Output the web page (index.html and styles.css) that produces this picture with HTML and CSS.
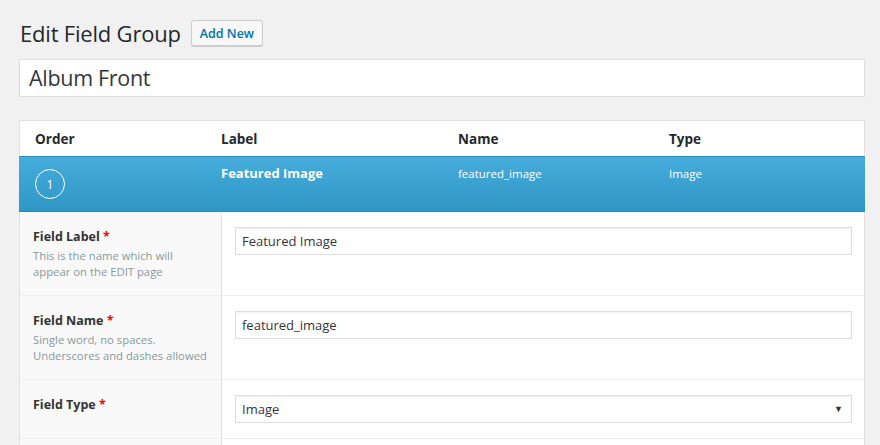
FILE: index.html
```html
<!DOCTYPE html>
<html>
<head>
<meta charset="utf-8">
<link rel="stylesheet" href="styles.css">
</head>
<body>
<div class="wrap">
  <div class="page-head">
    <h1 class="page-title">Edit Field Group</h1>
    <a class="btn-add">Add New</a>
  </div>
  <div class="title-box">Album Front</div>
  <div class="panel">
    <div class="thead">
      <div class="c-order">Order</div>
      <div class="c-label">Label</div>
      <div class="c-name">Name</div>
      <div class="c-type">Type</div>
    </div>
    <div class="active-row">
      <div class="c-order"><span class="num">1</span></div>
      <div class="c-label strong">Featured Image</div>
      <div class="c-name">featured_image</div>
      <div class="c-type">Image</div>
    </div>
    <div class="frow r1">
      <div class="flabel">
        <div class="lab">Field Label <span class="req">*</span></div>
        <div class="desc">This is the name which will<br>appear on the EDIT page</div>
      </div>
      <div class="finput"><div class="inp">Featured Image</div></div>
    </div>
    <div class="frow r2">
      <div class="flabel">
        <div class="lab">Field Name <span class="req">*</span></div>
        <div class="desc">Single word, no spaces.<br>Underscores and dashes allowed</div>
      </div>
      <div class="finput"><div class="inp">featured_image</div></div>
    </div>
    <div class="frow r3">
      <div class="flabel">
        <div class="lab">Field Type <span class="req">*</span></div>
      </div>
      <div class="finput"><div class="inp sel"><span>Image</span><span class="arrow">&#9660;</span></div></div>
    </div>
    <div class="frow r4">
      <div class="flabel"></div>
      <div class="finput"></div>
    </div>
  </div>
</div>
</body>
</html>
```
FILE: styles.css
```css
* { box-sizing: border-box; }
html, body { margin: 0; padding: 0; }
body {
  background: #f1f1f1;
  font-family: "Open Sans", "Noto Sans", sans-serif;
  color: #23282d;
  width: 880px;
  height: 445px;
  overflow: hidden;
}
.wrap { padding: 17px 15px 0 19px; }
.page-head { display: flex; align-items: center; height: 31px; }
.page-title {
  margin: 0 0 0 1px;
  font-size: 22px;
  font-weight: 400;
  color: #23282d;
  letter-spacing: -0.2px;
}
.btn-add {
  margin-left: 10px;
  margin-top: 1px;
  height: 26px;
  padding: 0 8px;
  display: flex;
  align-items: center;
  font-size: 12.5px;
  font-weight: 600;
  color: #0073aa;
  background: #f7f7f7;
  border: 1px solid #ccc;
  border-radius: 3px;
  box-shadow: 0 1px 0 #ccc;
}
.title-box {
  margin-top: 11px;
  height: 38px;
  background: #fff;
  border: 1px solid #ddd;
  padding: 0 9px;
  font-size: 21.5px;
  line-height: 36px;
  color: #32373c;
  letter-spacing: -0.3px;
}
.panel {
  margin-top: 23px;
  background: #fff;
  border: 1px solid #e1e1e1;
}
.thead, .active-row { display: flex; }
.c-order { width: 201px; padding-left: 15px; }
.c-label { width: 237px; }
.c-name { width: 211px; }
.c-type { flex: 1; }
.thead {
  height: 35px;
  align-items: center;
  font-size: 13.5px;
  font-weight: 700;
  color: #23282d;
  padding-top: 1px;
}
.active-row {
  height: 56px;
  background: linear-gradient(#46acdc, #2e96c5);
  border-top: 1px solid #2a8fbf;
  border-bottom: 1px solid #2a8fbf;
  color: #fff;
  font-size: 11.5px;
  margin: 0 -1px;
}
.active-row > div { padding-top: 8px; }
.active-row .c-order { width: 202px; padding-left: 16px; padding-top: 12px; }
.active-row .strong { font-size: 13px; font-weight: 700; padding-top: 7px; }
.active-row .c-name { padding-top: 9px; }
.active-row .c-type { padding-top: 9px; }
.num {
  display: flex;
  width: 30px;
  height: 30px;
  border: 1px solid #fff;
  border-radius: 50%;
  align-items: center;
  justify-content: center;
  font-size: 12px;
}
.frow { display: flex; border-top: 1px solid #eee; }
.frow.r1 { border-top: none; height: 83px; }
.frow.r2 { height: 84px; }
.frow.r3 { height: 59px; }
.frow.r4 { height: 20px; }
.flabel {
  width: 202px;
  background: #f9f9f9;
  border-right: 1px solid #e1e1e1;
  padding: 16px 8px 0 13px;
}
.lab {
  font-size: 12.5px;
  font-weight: 700;
  color: #333;
  line-height: 17px;
}
.req { color: #f00; }
.desc {
  margin-top: 3px;
  font-size: 11.3px;
  line-height: 16px;
  color: #899;
}
.finput { flex: 1; padding: 15px 12px 0 13px; }
.inp {
  height: 28px;
  border: 1px solid #ddd;
  background: #fff;
  padding: 0 6px;
  font-size: 13px;
  line-height: 26px;
  color: #32373c;
  box-shadow: inset 0 1px 2px rgba(0,0,0,0.05);
}
.sel { display: flex; justify-content: space-between; }
.arrow { font-size: 9px; color: #333; padding-right: 2px; }
```
